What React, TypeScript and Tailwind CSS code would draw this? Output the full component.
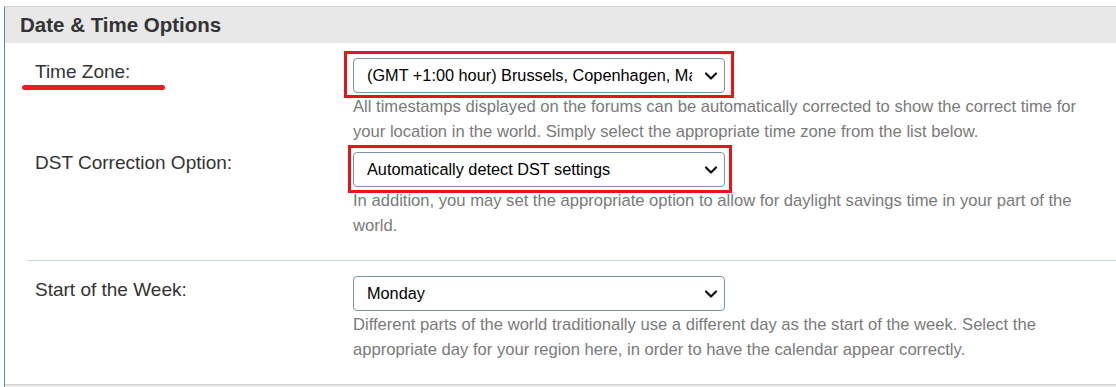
import React from 'react';

interface OptionRowProps {
  label: string;
  value: string;
  description: string[];
  labelPad: string;
  highlight?: 'zone' | 'dst';
  underline?: boolean;
  className?: string;
}

const Chevron = () => (
  <svg className="w-[14px] h-[10px]" viewBox="0 0 14 10" fill="none">
    <polyline points="2,2.5 7,7.5 12,2.5" stroke="#111" strokeWidth="2.2" strokeLinecap="round" strokeLinejoin="round" />
  </svg>
);

const OptionRow: React.FC<OptionRowProps> = ({ label, value, description, labelPad, highlight, underline, className }) => (
  <div className={`flex ${className ?? ''}`}>
    <div className={`relative w-[326px] flex-none pl-[8px] text-[19px] leading-[22px] text-[#333] ${labelPad}`}>
      {label}
      {underline && (
        <div className="absolute left-[-5px] top-[27px] w-[143px] h-[5px] rounded-full bg-[#ee1c25]"></div>
      )}
    </div>
    <div className="flex-1">
      <div className="relative w-[372px]">
        {highlight === 'zone' && (
          <div className="absolute left-[-9px] right-[-9px] top-[-7px] bottom-[-5px] border-[3px] border-[#e8141c] pointer-events-none"></div>
        )}
        {highlight === 'dst' && (
          <div className="absolute left-[-5px] right-[-7px] top-[-7px] bottom-[-6px] border-[3px] border-[#e8141c] pointer-events-none"></div>
        )}
        <div className="relative h-[35px] flex items-center pl-[13px] border border-[#7d93ab] rounded-[4px] bg-white text-[16.3px] text-black">
          <span className="w-[325px] whitespace-nowrap overflow-hidden">{value}</span>
          <span className="absolute right-[6px] top-[12px] flex items-center"><Chevron /></span>
        </div>
      </div>
      <div className="mt-[1px] text-[16.6px] leading-[25px] text-[#7a7a7a]">
        {description.map((line, i) => (
          <div key={i} className="whitespace-nowrap">{line}</div>
        ))}
      </div>
    </div>
  </div>
);

export default function App() {
  return (
    <div className="w-[1116px] h-[387px] bg-white overflow-hidden font-['Liberation_Sans',Arial,sans-serif]">
      <div className="pt-[6px] pl-[4px]">
        <div className="border-l border-t border-l-[#5d87a9] border-t-[#d2d2d2]">
          {/* Section header */}
          <div className="h-[36px] bg-[#e8e8e8] pl-[15px] flex items-center text-[20.5px] font-bold text-[#333]">
            Date &amp; Time Options
          </div>

          <div className="ml-[22px]">
            <div className="pt-[15px] pb-[22px] border-b border-[#cbd9e5]">
              <OptionRow
                label="Time Zone:"
                labelPad="pt-[3px]"
                underline
                highlight="zone"
                value="(GMT +1:00 hour) Brussels, Copenhagen, Madrid, Paris"
                description={[
                  'All timestamps displayed on the forums can be automatically corrected to show the correct time for',
                  'your location in the world. Simply select the appropriate time zone from the list below.',
                ]}
              />
              <OptionRow
                className="mt-[8px]"
                label="DST Correction Option:"
                labelPad="pt-[0px]"
                highlight="dst"
                value="Automatically detect DST settings"
                description={[
                  'In addition, you may set the appropriate option to allow for daylight savings time in your part of the',
                  'world.',
                ]}
              />
            </div>
            <div className="pt-[15px] pb-[22px]">
              <OptionRow
                label="Start of the Week:"
                labelPad="pt-[3px]"
                value="Monday"
                description={[
                  'Different parts of the world traditionally use a different day as the start of the week. Select the',
                  'appropriate day for your region here, in order to have the calendar appear correctly.',
                ]}
              />
            </div>
          </div>

          <div className="h-[10px] bg-[#e8e8e8] border-t border-[#d2d2d2]"></div>
        </div>
      </div>
    </div>
  );
}
